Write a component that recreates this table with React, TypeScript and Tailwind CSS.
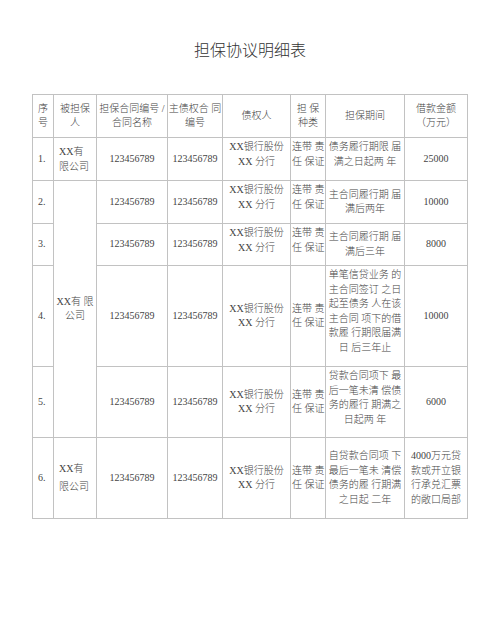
import React from "react";

const B = "border border-[#c2c2c2] p-0";
const mid = "align-middle";
const top = "align-top pt-[2px]";

export default function App() {
  return (
    <div className="w-[500px] h-[641px] bg-white text-[#444] font-light font-['Liberation_Serif','Noto_Sans_CJK_SC',serif]">
      <div className="pt-[41px] text-center text-[16px] leading-[20px] text-[#333]">担保协议明细表</div>
      <table className="mt-[33px] mx-auto table-fixed border-collapse text-[10px] leading-[14.5px] w-[435px]">
        <colgroup>
          <col className="w-[21px]" />
          <col className="w-[43px]" />
          <col className="w-[71px]" />
          <col className="w-[55px]" />
          <col className="w-[68px]" />
          <col className="w-[35px]" />
          <col className="w-[79px]" />
          <col className="w-[63px]" />
        </colgroup>
        <tbody>
          <tr className="h-[43px]">
            <td className={`${B} ${mid} text-center`}>序<br />号</td>
            <td className={`${B} ${mid} text-center`}>被担保<br />人</td>
            <td className={`${B} ${mid} text-center whitespace-nowrap`}>担保合同编号 /<br />合同名称</td>
            <td className={`${B} ${mid} text-center whitespace-nowrap`}>主债权合 同<br />编号</td>
            <td className={`${B} ${mid} text-center`}>债权人</td>
            <td className={`${B} ${mid} text-center`}>担 保<br />种类</td>
            <td className={`${B} ${mid} text-center`}>担保期间</td>
            <td className={`${B} ${mid} text-center`}>借款金额<br />（万元）</td>
          </tr>
          <tr className="h-[43px]">
            <td className={`${B} ${mid} text-left pl-[5px]`}>1.</td>
            <td className={`${B} ${mid} text-left pl-[5px] leading-[15px]`}>XX有<br />限公司</td>
            <td className={`${B} ${mid} text-center`}>123456789</td>
            <td className={`${B} ${mid} text-center`}>123456789</td>
            <td className={`${B} ${top} text-center whitespace-nowrap`}>XX银行股份<br />XX 分行</td>
            <td className={`${B} ${top} text-left pl-[1px] whitespace-nowrap`}>连带 责<br />任 保证</td>
            <td className={`${B} ${top} text-center whitespace-nowrap`}>债务履行期限 届<br />满之日起两 年</td>
            <td className={`${B} ${mid} text-center`}>25000</td>
          </tr>
          <tr className="h-[43px]">
            <td className={`${B} ${mid} text-left pl-[5px]`}>2.</td>
            <td rowSpan={4} className={`${B} ${mid} text-center whitespace-nowrap`}>XX有 限<br />公司</td>
            <td className={`${B} ${mid} text-center`}>123456789</td>
            <td className={`${B} ${mid} text-center`}>123456789</td>
            <td className={`${B} ${top} text-center whitespace-nowrap`}>XX银行股份<br />XX 分行</td>
            <td className={`${B} ${top} text-left pl-[1px] whitespace-nowrap`}>连带 责<br />任 保证</td>
            <td className={`${B} ${mid} text-center whitespace-nowrap`}>主合同履行期 届<br />满后两年</td>
            <td className={`${B} ${mid} text-center`}>10000</td>
          </tr>
          <tr className="h-[42px]">
            <td className={`${B} ${mid} text-left pl-[5px]`}>3.</td>
            <td className={`${B} ${mid} text-center`}>123456789</td>
            <td className={`${B} ${mid} text-center`}>123456789</td>
            <td className={`${B} ${top} text-center whitespace-nowrap`}>XX银行股份<br />XX 分行</td>
            <td className={`${B} ${top} text-left pl-[1px] whitespace-nowrap`}>连带 责<br />任 保证</td>
            <td className={`${B} ${mid} text-center whitespace-nowrap`}>主合同履行期 届<br />满后三年</td>
            <td className={`${B} ${mid} text-center`}>8000</td>
          </tr>
          <tr className="h-[101px]">
            <td className={`${B} ${mid} text-left pl-[5px]`}>4.</td>
            <td className={`${B} ${mid} text-center`}>123456789</td>
            <td className={`${B} ${mid} text-center`}>123456789</td>
            <td className={`${B} ${mid} text-center whitespace-nowrap`}>XX银行股份<br />XX 分行</td>
            <td className={`${B} ${mid} text-left pl-[1px] whitespace-nowrap`}>连带 责<br />任 保证</td>
            <td className={`${B} ${top} text-center whitespace-nowrap`}>
              单笔信贷业务 的<br />主合同签订 之日<br />起至债务 人在该<br />主合同 项下的借<br />款履 行期限届满<br />日 后三年止
            </td>
            <td className={`${B} ${mid} text-center`}>10000</td>
          </tr>
          <tr className="h-[71px]">
            <td className={`${B} ${mid} text-left pl-[5px]`}>5.</td>
            <td className={`${B} ${mid} text-center`}>123456789</td>
            <td className={`${B} ${mid} text-center`}>123456789</td>
            <td className={`${B} ${mid} text-center whitespace-nowrap`}>XX银行股份<br />XX 分行</td>
            <td className={`${B} ${mid} text-left pl-[1px] whitespace-nowrap`}>连带 责<br />任 保证</td>
            <td className={`${B} ${top} text-center whitespace-nowrap`}>
              贷款合同项下 最<br />后一笔未清 偿债<br />务的履行 期满之<br />日起两 年
            </td>
            <td className={`${B} ${mid} text-center`}>6000</td>
          </tr>
          <tr className="h-[81px]">
            <td className={`${B} ${mid} text-left pl-[5px]`}>6.</td>
            <td className={`${B} ${mid} text-left pl-[5px] leading-[18px]`}>XX有<br />限公司</td>
            <td className={`${B} ${mid} text-center`}>123456789</td>
            <td className={`${B} ${mid} text-center`}>123456789</td>
            <td className={`${B} ${mid} text-center whitespace-nowrap`}>XX银行股份<br />XX 分行</td>
            <td className={`${B} ${mid} text-left pl-[1px] whitespace-nowrap`}>连带 责<br />任 保证</td>
            <td className={`${B} ${mid} text-center whitespace-nowrap`}>
              自贷款合同项 下<br />最后一笔未 清偿<br />债务的履 行期满<br />之日起 二年
            </td>
            <td className={`${B} ${mid} text-center whitespace-nowrap`}>
              4000万元贷<br />款或开立银<br />行承兑汇票<br />的敞口局部
            </td>
          </tr>
        </tbody>
      </table>
    </div>
  );
}
